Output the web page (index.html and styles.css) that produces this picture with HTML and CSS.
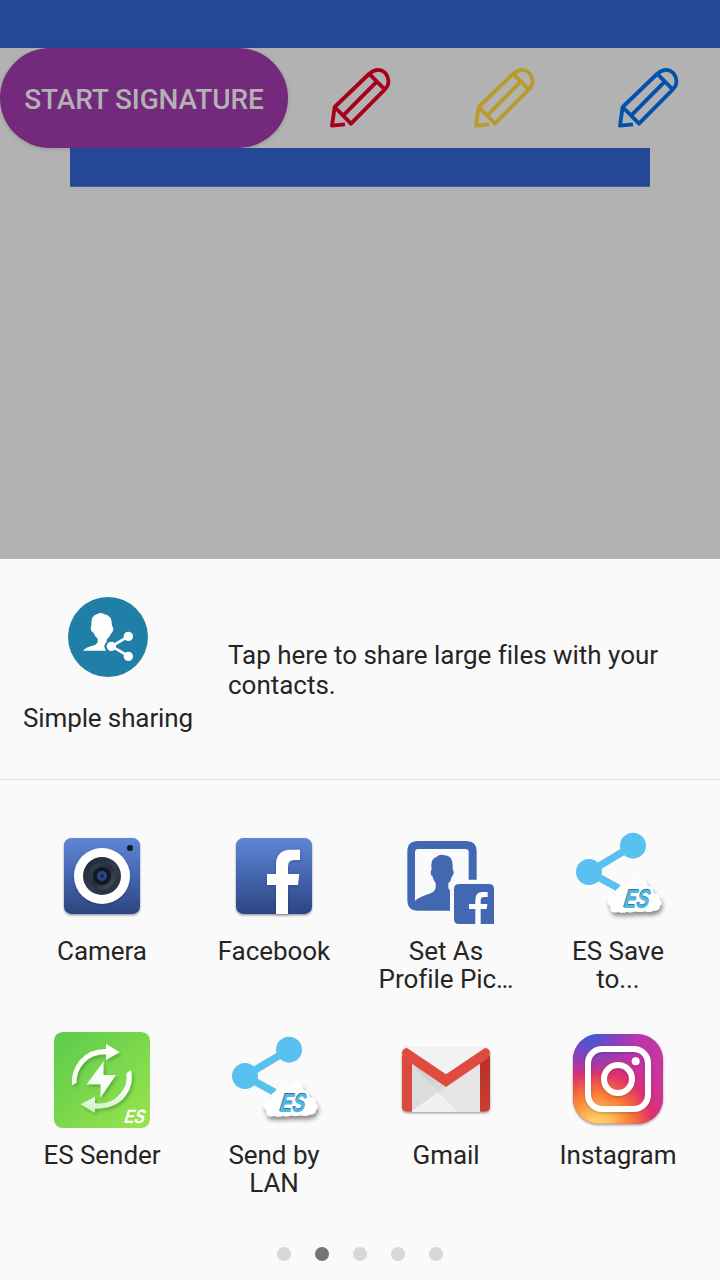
FILE: index.html
```html
<!DOCTYPE html>
<html lang="en">
<head>
<meta charset="utf-8">
<title>Share signature</title>
<link rel="stylesheet" href="styles.css">
</head>
<body>
<svg class="defs" width="0" height="0" aria-hidden="true">
  <defs>
    <linearGradient id="fbBlue" x1="0" y1="0" x2="0" y2="1"><stop offset="0" stop-color="#6086d5"/><stop offset=".5" stop-color="#4565b0"/><stop offset="1" stop-color="#2b467f"/></linearGradient>
    <linearGradient id="lens" x1="0" y1="0" x2="1" y2="1"><stop offset="0" stop-color="#1c2535"/><stop offset=".5" stop-color="#303b4b"/><stop offset="1" stop-color="#222d3e"/></linearGradient>
    <linearGradient id="lensRing" x1="0" y1="0" x2="1" y2="1"><stop offset="0" stop-color="#3c4654"/><stop offset=".5" stop-color="#232c38"/><stop offset="1" stop-color="#4d5662"/></linearGradient>
    <linearGradient id="esGreen" x1="0" y1="0" x2="1" y2="1"><stop offset="0" stop-color="#5bcb4b"/><stop offset="1" stop-color="#9ae44e"/></linearGradient>
    <linearGradient id="fade" gradientUnits="userSpaceOnUse" x1="0" y1="60" x2="0" y2="267"><stop offset="0" stop-color="#fff"/><stop offset=".7" stop-color="#f6fdf3"/><stop offset="1" stop-color="#cdf0bb"/></linearGradient>
    <linearGradient id="gmFold" x1="0" y1="0" x2="1" y2="0"><stop offset="0" stop-color="#c4c4c4"/><stop offset="1" stop-color="#dedede"/></linearGradient>
    <linearGradient id="gmRight" x1="0" y1="0" x2="0" y2="1"><stop offset="0" stop-color="#b63226"/><stop offset="1" stop-color="#c83e30"/></linearGradient>
    <linearGradient id="igBase" x1="0" y1="0" x2="1" y2=".2"><stop offset="0" stop-color="#8b3bc0"/><stop offset=".5" stop-color="#a838b4"/><stop offset="1" stop-color="#cc349f"/></linearGradient>
    <radialGradient id="igWarm" cx=".27" cy="1.05" r=".95"><stop offset="0" stop-color="#ffdc75"/><stop offset=".15" stop-color="#ffc45e"/><stop offset=".42" stop-color="#fa7834"/><stop offset=".66" stop-color="#e0306c"/><stop offset="1" stop-color="#c332a0" stop-opacity="0"/></radialGradient>
    <radialGradient id="igCool" cx=".2" cy="0" r=".5"><stop offset="0" stop-color="#3d5bd8"/><stop offset=".35" stop-color="#5851cd" stop-opacity=".75"/><stop offset="1" stop-color="#8b3bc0" stop-opacity="0"/></radialGradient>
    <filter id="drop" x="-20%" y="-20%" width="140%" height="150%"><feDropShadow dx="0" dy="4" stdDeviation="3" flood-color="#000" flood-opacity=".4"/></filter>
    <filter id="softDrop" x="-20%" y="-20%" width="140%" height="150%"><feDropShadow dx="0" dy="3" stdDeviation="4" flood-color="#000" flood-opacity=".22"/></filter>
    <filter id="cloudDrop" x="-20%" y="-30%" width="140%" height="180%"><feGaussianBlur in="SourceGraphic" stdDeviation="2" result="soft"/><feDropShadow in="soft" dx="4" dy="11" stdDeviation="7" flood-color="#000" flood-opacity=".45"/></filter>
    <filter id="glyphDrop" x="-30%" y="-30%" width="170%" height="170%"><feDropShadow dx="5" dy="7" stdDeviation="5" flood-color="#246d1c" flood-opacity=".4"/></filter>
    <symbol id="pencil" viewBox="0 0 240 252">
      <g fill="none" stroke="currentColor" stroke-width="11.5" stroke-linejoin="round" stroke-linecap="butt">
        <path d="M44 153L147 54Q166 36 186 44Q203 52 205 73Q207 88 194 101L93 203Z"/>
        <path d="M147 53L194 100M70 178L168 79M44 153L36 209L75 205"/>
      </g>
    </symbol>
    <symbol id="esShare" viewBox="18 18 288 288" overflow="visible">
      <path d="M207 71L75 150L164 199" fill="none" stroke="#58c1ef" stroke-width="22"/>
      <circle cx="207" cy="71" r="39" fill="#58c1ef"/><circle cx="75" cy="150" r="39" fill="#58c1ef"/>
      <path d="M151 271Q137 268 140 254Q125 241 134 229Q143 219 155 220Q150 205 163 198Q172 191 182 194Q189 179 207 183Q216 166 235 172Q250 178 250 193Q269 195 268 214Q289 219 288 233Q298 243 287 253Q287 267 267 266Q257 273 243 267Q229 273 214 268Q202 273 189 269Q177 274 164 270Z" fill="#fff" filter="url(#cloudDrop)"/>
      <g class="es-mark" transform="translate(173 257) skewX(-17)" font-size="78"><text x="0" y="-1" textLength="76" lengthAdjust="spacingAndGlyphs" fill="#3b748b">ES</text><text x="3" y="1" textLength="75" lengthAdjust="spacingAndGlyphs" fill="#4fb9e5">ES</text></g>
    </symbol>
  </defs>
</svg>
<div class="screen">
  <header class="status-bar"></header>
  <main class="backdrop">
    <div class="toolbar">
      <button class="start">START SIGNATURE</button>
      <div class="pens">
        <svg class="pen pen-red"><use href="#pencil"/></svg>
        <svg class="pen pen-yellow"><use href="#pencil"/></svg>
        <svg class="pen pen-blue"><use href="#pencil"/></svg>
      </div>
    </div>
    <div class="canvas-bar"></div>
  </main>
  <section class="sheet">
    <div class="simple">
      <div class="simple-app">
        <svg class="simple-icon" viewBox="60 36 240 240">
          <circle cx="180" cy="156" r="120" fill="#1f7fa7"/>
          <path d="M105 197Q113 187 133 182Q147 179 149 170V161Q140 154 137 144Q128 139 128 131Q128 126 130 122Q128 91 148 87Q159 81 169 88Q192 90 192 123Q197 126 196 133Q195 142 189 146Q184 157 176 164V171Q169 176 169 184Q169 191 174 197Z" fill="#fff"/>
          <path d="M241 154L191 184L241 213" fill="none" stroke="#fff" stroke-width="8"/>
          <circle cx="241" cy="154" r="14" fill="#fff"/><circle cx="190" cy="184" r="14" fill="#fff"/><circle cx="241" cy="214" r="14" fill="#fff"/>
        </svg>
        <span class="simple-label">Simple sharing</span>
      </div>
      <p class="simple-text">Tap here to share large files with your contacts.</p>
    </div>
    <div class="apps">
      <div class="app">
        <svg class="icon" viewBox="6 6 288 288">
          <rect x="36" y="36" width="228" height="228" rx="22" fill="url(#fbBlue)" filter="url(#drop)"/>
          <circle cx="150" cy="150" r="84" fill="#fff" filter="url(#softDrop)"/>
          <circle cx="150" cy="150" r="57" fill="url(#lens)"/><circle cx="150" cy="150" r="40" fill="url(#lensRing)"/>
          <circle cx="150" cy="150" r="27" fill="#111820"/><circle cx="150" cy="150" r="15" fill="#2b4684"/><circle cx="150" cy="150" r="6" fill="#182a55"/>
          <circle cx="234" cy="66" r="9" fill="#101725"/>
        </svg>
        <span class="label">Camera</span>
      </div>
      <div class="app">
        <svg class="icon" viewBox="6 6 288 288">
          <rect x="36" y="36" width="228" height="228" rx="22" fill="url(#fbBlue)" filter="url(#drop)"/>
          <path d="M156 264V177H129V144H156V118Q156 71 201 71H228V102H210Q192 102 192 121V144H226L222 177H192V264Z" fill="#fff" filter="url(#softDrop)"/>
        </svg>
        <span class="label">Facebook</span>
      </div>
      <div class="app">
        <svg class="icon" viewBox="6 6 288 288">
          <path fill="#4268b2" fill-rule="evenodd" d="M66 45H211Q242 45 242 76V161H218V79Q218 69 208 69H67Q57 69 57 79V224Q68 213 100 203Q119 197 119 184V171Q112 164 110 152Q104 148 104 140Q104 134 107 130Q102 99 121 93Q132 83 146 88Q170 89 170 119V130Q173 134 173 141Q172 149 167 153Q165 165 157 172V184Q157 190 162 193V254H66Q34 254 34 222V76Q34 45 66 45Z"/>
          <path fill="#4268b2" d="M190 174H279Q294 174 294 189V294H189Q174 294 174 279V189Q174 174 190 174Z"/>
          <path fill="#fff" d="M238 294V249H219V234H238V221Q238 198 259 198H275V213H264Q254 213 254 223V234H274L272 249H254V294Z"/>
        </svg>
        <span class="label">Set As<br>Profile Pic…</span>
      </div>
      <div class="app">
        <svg class="icon"><use href="#esShare"/></svg>
        <span class="label">ES Save<br>to...</span>
      </div>
      <div class="app">
        <svg class="icon" viewBox="18 24 288 288">
          <rect x="18" y="24" width="288" height="288" rx="26" fill="url(#esGreen)"/>
          <g fill="url(#fade)" filter="url(#glyphDrop)">
            <path d="M72 184Q68 142 96 108Q126 74 174 75V59L215 85L174 108V91Q132 91 109 116Q85 140 85 177Z"/>
            <path d="M249 138Q259 180 233 215Q204 254 141 254V267L98 241L141 218V238Q187 243 214 212Q241 184 235 148Z"/>
            <path d="M167 112L116 181H158L157 221L204 153H166Z"/>
          </g>
          <g class="es-mark" transform="translate(225 297) skewX(-17)" font-size="58"><text x="0" y="0" textLength="61" lengthAdjust="spacingAndGlyphs" fill="#fff">ES</text></g>
        </svg>
        <span class="label">ES Sender</span>
      </div>
      <div class="app">
        <svg class="icon"><use href="#esShare"/></svg>
        <span class="label">Send by<br>LAN</span>
      </div>
      <div class="app">
        <svg class="icon" viewBox="18 6 288 288">
          <rect x="30" y="52" width="264" height="193" rx="15" fill="#e6e6e6" filter="url(#drop)"/>
          <path d="M60 100L162 165L264 100V245H60Z" fill="#e5e5e5"/>
          <path d="M60 103L141 187L162 171Z" fill="url(#gmFold)"/><path d="M60 103L141 187L60 243Z" fill="#dcdcdc"/>
          <path d="M60 243L138 187L198 245H60Z" fill="#f0f0f0"/>
          <path d="M43 52H281L162 133Z" fill="#f2f2f2"/>
          <path d="M30 76L60 100V245H44Q30 245 30 231Z" fill="#d94a3d"/>
          <path d="M294 76L264 100V245H280Q294 245 294 231Z" fill="url(#gmRight)"/>
          <path d="M45 54L162 133L279 54Q294 56 294 70Q294 80 285 87L162 171L39 87Q30 80 30 70Q30 56 45 54Z" fill="#df4b3f"/>
        </svg>
        <span class="label">Gmail</span>
      </div>
      <div class="app">
        <svg class="icon" viewBox="18 24 288 288">
          <rect x="27" y="30" width="270" height="269" rx="76" fill="url(#igBase)" filter="url(#drop)"/>
          <rect x="27" y="30" width="270" height="269" rx="76" fill="url(#igWarm)"/>
          <rect x="27" y="30" width="270" height="269" rx="76" fill="url(#igCool)"/>
          <g filter="url(#softDrop)"><rect x="72" y="75" width="180" height="180" rx="43" fill="none" stroke="#fff" stroke-width="18"/>
          <circle cx="162" cy="165" r="42" fill="none" stroke="#fff" stroke-width="18"/><circle cx="215" cy="112" r="12" fill="#fff"/></g>
        </svg>
        <span class="label">Instagram</span>
      </div>
    </div>
    <div class="dots"><i class="dot"></i><i class="dot active"></i><i class="dot"></i><i class="dot"></i><i class="dot"></i></div>
  </section>
</div>
</body>
</html>
```
FILE: styles.css
```css
* { box-sizing: border-box; }
body { margin: 0; font-family: Roboto, "Noto Sans", sans-serif; color: #252525; }
.defs { display: block; height: 0; }
.screen { width: 720px; height: 1280px; display: flex; flex-direction: column; overflow: hidden; background: #b2b2b2; }
.status-bar { height: 48px; background: #244896; }
.backdrop { height: 511px; background: #b2b2b2; }
.toolbar { display: flex; height: 100px; }
.start { width: 288px; height: 100px; padding: 2px 0 0; border: 0; border-radius: 50px; background: #73297c; color: #b2b2b2; font: 500 28px Roboto, sans-serif; letter-spacing: -0.1px; white-space: nowrap; box-shadow: 0 1px 4px rgba(0, 0, 0, .16); }
.pens { flex: 1; display: flex; }
.pen { width: 80px; height: 84px; margin: 8px 32px; }
.pen-red { color: #a6001d; }
.pen-yellow { color: #b99b2c; }
.pen-blue { color: #0052ad; }
.canvas-bar { position: relative; height: 39px; margin: 0 70px; background: #244896; border-bottom: 1px solid #3f5f9e; }
.sheet { flex: 1; display: flex; flex-direction: column; background: #fafafa; }
.simple { height: 221px; display: flex; border-bottom: 1px solid #dcdcdc; }
.simple-app { width: 216px; padding-top: 38px; display: flex; flex-direction: column; align-items: center; }
.simple-icon { width: 80px; height: 80px; }
.simple-label { margin-top: 26px; font-size: 26px; line-height: 30px; letter-spacing: -0.12px; white-space: nowrap; }
.simple-text { width: 460px; margin: 81px 0 0 12px; font-size: 26px; line-height: 30px; letter-spacing: -0.02px; }
.apps { display: grid; grid-template-columns: repeat(4, 172px); grid-auto-rows: 204px; padding: 48px 16px 0; }
.app { display: flex; flex-direction: column; align-items: center; }
.icon { width: 96px; height: 96px; overflow: visible; }
.es-mark { font-family: "Liberation Sans", sans-serif; font-weight: 700; }
.label { margin-top: 13px; font-size: 26px; line-height: 28px; letter-spacing: -0.05px; text-align: center; white-space: nowrap; }
.dots { display: flex; justify-content: center; gap: 24px; margin-top: 11px; }
.dot { width: 14px; height: 14px; border-radius: 50%; background: #d8d8d8; }
.dot.active { background: #757575; }
```
